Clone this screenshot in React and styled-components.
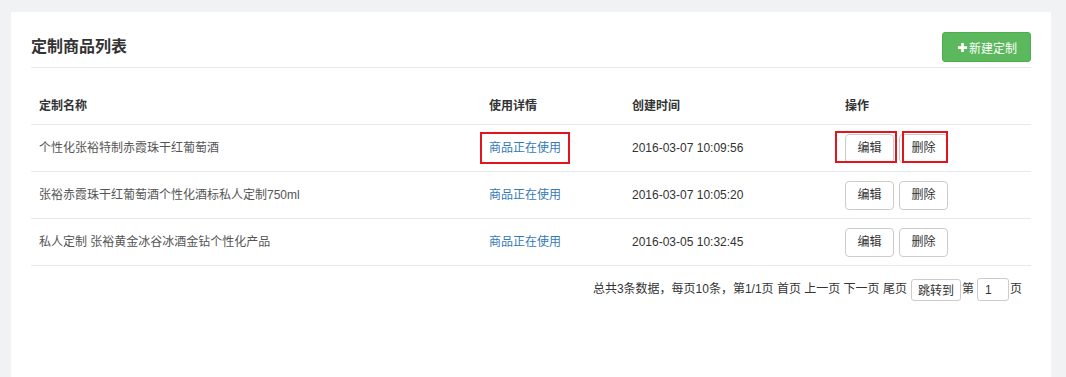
import styled, { createGlobalStyle } from "styled-components";

const GlobalStyle = createGlobalStyle`
  html, body {
    margin: 0;
    padding: 0;
    background: #f1f2f4;
  }
  body {
    font-family: "Liberation Sans", "Noto Sans CJK SC", sans-serif;
    font-size: 12px;
    color: #333;
  }
`;

const Page = styled.div`
  padding: 12px 15px 0 11px;
`;

const Panel = styled.div`
  background: #fff;
  min-height: 365px;
  padding: 0 20px;
  box-sizing: border-box;
`;

const PanelHeader = styled.div`
  display: flex;
  align-items: center;
  justify-content: space-between;
  padding: 20px 0 5px;
  border-bottom: 1px solid #e7eaec;
`;

const Title = styled.h2`
  margin: 0;
  font-size: 16px;
  font-weight: bold;
  color: #333;
  line-height: 24px;
`;

const AddButton = styled.button`
  display: flex;
  align-items: center;
  gap: 1px;
  height: 30px;
  padding: 0 13px 0 14px;
  background: #5cb85c;
  border: 1px solid #4cae4c;
  border-radius: 3px;
  color: #fff;
  font-family: inherit;
  font-size: 12px;
  cursor: pointer;

  & svg {
    width: 11px;
    height: 11px;
  }
`;

const Table = styled.table`
  width: 100%;
  margin-top: 20px;
  border-collapse: collapse;
  table-layout: fixed;
`;

const Th = styled.th`
  text-align: left;
  font-weight: bold;
  color: #333;
  padding: 10px 8px;
  line-height: 16px;
  border-bottom: 1px solid #e7eaec;
`;

const Td = styled.td`
  padding: 9px 8px 8px;
  line-height: 17px;
  height: 29px;
  vertical-align: middle;
  color: ${(p) => (p.$muted ? "#555" : "#333")};
  border-bottom: 1px solid #e7eaec;
  white-space: nowrap;
`;

const Link = styled.a`
  color: #337ab7;
  text-decoration: none;
`;

const Mark = styled.span`
  position: relative;
  display: inline-block;

  &::after {
    content: "";
    position: absolute;
    top: ${(p) => p.$t}px;
    right: ${(p) => p.$r}px;
    bottom: ${(p) => p.$b}px;
    left: ${(p) => p.$l}px;
    border: 2px solid #e2151c;
    pointer-events: none;
  }
`;

const Actions = styled.div`
  display: flex;
  gap: 5px;
`;

const ActionButton = styled.button`
  width: 49px;
  height: 29px;
  padding: 0;
  background: #fff;
  border: 1px solid #ccc;
  border-radius: 4px;
  color: #333;
  font-family: inherit;
  font-size: 12px;
  line-height: 17px;
  cursor: pointer;
`;

const Pager = styled.div`
  display: flex;
  justify-content: flex-end;
  align-items: center;
  padding: 12px 9px 0 0;
  color: #333;
  line-height: 17px;
`;

const PagerText = styled.span`
  margin-right: ${(p) => p.$mr || 0}px;
`;

const JumpButton = styled.button`
  height: 22px;
  padding: 0 6px;
  background: #fff;
  border: 1px solid #ccc;
  border-radius: 3px;
  color: #333;
  font-family: inherit;
  font-size: 12px;
  margin-right: 1px;
`;

const PageInput = styled.input`
  width: 32px;
  height: 23px;
  box-sizing: border-box;
  padding: 0 7px;
  margin: 0 1px 0 3px;
  border: 1px solid #ccc;
  border-radius: 3px;
  font-family: inherit;
  font-size: 12px;
  color: #333;
`;

const rows = [
  { name: "个性化张裕特制赤霞珠干红葡萄酒", time: "2016-03-07 10:09:56", marked: true },
  { name: "张裕赤霞珠干红葡萄酒个性化酒标私人定制750ml", time: "2016-03-07 10:05:20" },
  { name: "私人定制 张裕黄金冰谷冰酒金钻个性化产品", time: "2016-03-05 10:32:45" },
];

function PlusIcon() {
  return (
    <svg viewBox="0 0 12 12">
      <path d="M6 1v10M1 6h10" stroke="#fff" strokeWidth="3" />
    </svg>
  );
}

function Wrap({ on, children, ...inset }) {
  if (!on) return children;
  return (
    <Mark $t={inset.t} $r={inset.r} $b={inset.b} $l={inset.l}>
      {children}
    </Mark>
  );
}

export default function App() {
  return (
    <Page>
      <GlobalStyle />
      <Panel>
        <PanelHeader>
          <Title>定制商品列表</Title>
          <AddButton>
            <PlusIcon />
            新建定制
          </AddButton>
        </PanelHeader>

        <Table>
          <colgroup>
            <col style={{ width: 450 }} />
            <col style={{ width: 143 }} />
            <col style={{ width: 213 }} />
            <col style={{ width: 194 }} />
          </colgroup>
          <thead>
            <tr>
              <Th>定制名称</Th>
              <Th>使用详情</Th>
              <Th>创建时间</Th>
              <Th>操作</Th>
            </tr>
          </thead>
          <tbody>
            {rows.map((row) => (
              <tr key={row.time}>
                <Td $muted>{row.name}</Td>
                <Td>
                  <Wrap on={row.marked} t={-8} r={-9} b={-7} l={-9}>
                    <Link href="#">商品正在使用</Link>
                  </Wrap>
                </Td>
                <Td>{row.time}</Td>
                <Td>
                  <Actions>
                    <Wrap on={row.marked} t={-3} r={-3} b={0} l={-10}>
                      <ActionButton>编辑</ActionButton>
                    </Wrap>
                    <Wrap on={row.marked} t={-3} r={0} b={0} l={3}>
                      <ActionButton>删除</ActionButton>
                    </Wrap>
                  </Actions>
                </Td>
              </tr>
            ))}
          </tbody>
        </Table>

        <Pager>
          <PagerText $mr={4}>
            总共3条数据，每页10条，第1/1页 首页 上一页 下一页 尾页
          </PagerText>
          <JumpButton>跳转到</JumpButton>
          <PagerText>第</PagerText>
          <PageInput defaultValue="1" />
          <PagerText>页</PagerText>
        </Pager>
      </Panel>
    </Page>
  );
}
